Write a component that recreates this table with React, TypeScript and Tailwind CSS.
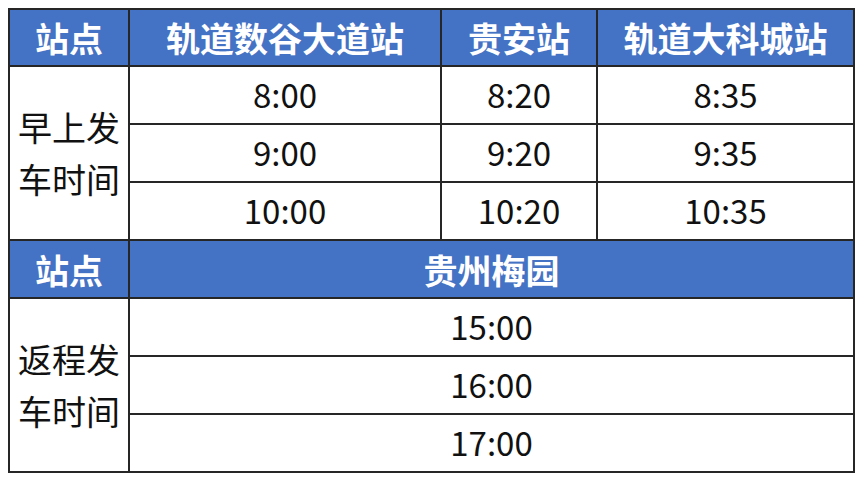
import React from "react";

const morning = [
  ["8:00", "8:20", "8:35"],
  ["9:00", "9:20", "9:35"],
  ["10:00", "10:20", "10:35"],
];

const evening = ["15:00", "16:00", "17:00"];

const head = "bg-[#4472c4] text-white font-bold text-[34px] flex items-center justify-center";
const cell = "bg-white text-[#111] text-[33px] flex items-center justify-center";
const label = "bg-white text-[#111] text-[34px] leading-[52px] flex flex-col items-center justify-center row-span-3";

const App = () => {
  return (
    <div
      className="w-[864px] h-[481px] bg-white pt-[8px] pl-[8px]"
      style={{ fontFamily: '"Noto Sans CJK SC", "Noto Sans", sans-serif' }}
    >
      <div className="inline-grid grid-cols-[118px_310px_154px_255px] grid-rows-[55px_repeat(7,56px)] gap-[2px] p-[2px] bg-[#262626]">
        {/* top header */}
        <div className={head}>站点</div>
        <div className={head}>轨道数谷大道站</div>
        <div className={head}>贵安站</div>
        <div className={head}>轨道大科城站</div>

        {/* morning departures */}
        <div className={label}>
          <span>早上发</span>
          <span>车时间</span>
        </div>
        {morning.map((row, i) => (
          <React.Fragment key={i}>
            {row.map((t, j) => (
              <div key={j} className={cell}>
                {t}
              </div>
            ))}
          </React.Fragment>
        ))}

        {/* second header */}
        <div className={head}>站点</div>
        <div className={`${head} col-span-3`}>贵州梅园</div>

        {/* return trips */}
        <div className={label}>
          <span>返程发</span>
          <span>车时间</span>
        </div>
        {evening.map((t) => (
          <div key={t} className={`${cell} col-span-3`}>
            {t}
          </div>
        ))}
      </div>
    </div>
  );
};

export default App;
